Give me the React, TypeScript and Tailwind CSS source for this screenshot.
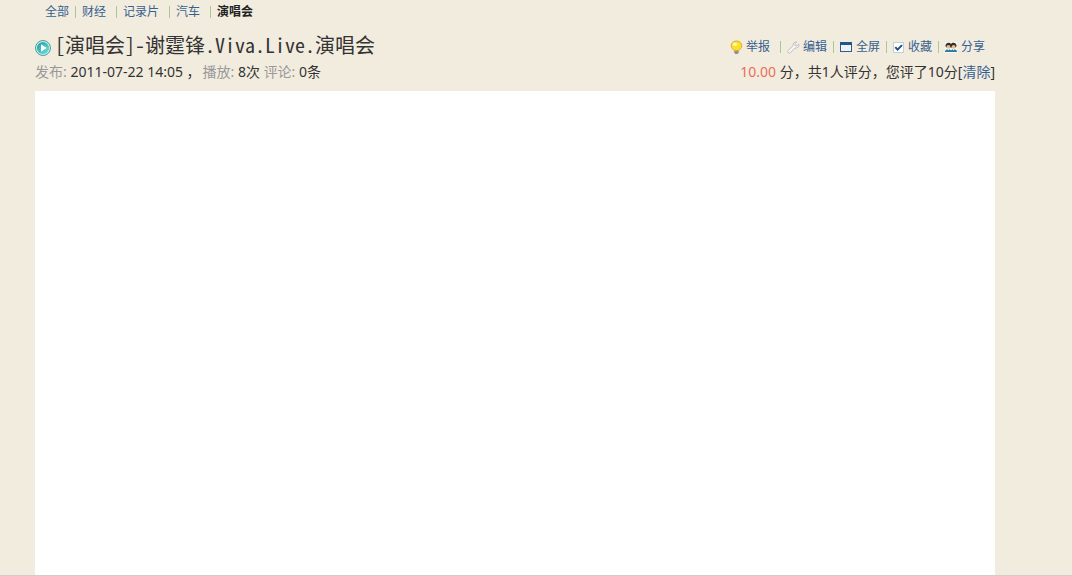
import React from 'react';

const categories = [
  { name: '全部', gap: 'pr-[6px]' },
  { name: '财经', gap: 'pl-[6px] pr-[10px]' },
  { name: '记录片', gap: 'pl-[6px] pr-[10px]' },
  { name: '汽车', gap: 'pl-[6px] pr-[10px]' },
];

const PlayIcon = () => (
  <svg width="16" height="16" viewBox="0 0 16 16" aria-hidden="true">
    <defs>
      <linearGradient id="play-fill" x1="0" y1="0" x2="1" y2="1">
        <stop offset="0" stopColor="#1f9aa6" />
        <stop offset="1" stopColor="#6fe3dc" />
      </linearGradient>
    </defs>
    <circle cx="8" cy="8" r="7.5" fill="#c9eeea" stroke="#4a9f9f" />
    <circle cx="8" cy="8" r="6.1" fill="url(#play-fill)" />
    <path d="M6 4.3v7.4L11.8 8z" fill="#fff" />
  </svg>
);

const BulbIcon = () => (
  <svg width="13" height="14" viewBox="0 0 13 14" aria-hidden="true">
    <path d="M6.5 1C3.4 1 1.2 3 1.2 5.7c0 2.4 1.8 3.3 2.8 4.9h5c1-1.6 2.8-2.5 2.8-4.9C11.8 3 9.6 1 6.5 1z" fill="#fbe02a" stroke="#e3a92c" />
    <ellipse cx="5" cy="4.3" rx="2.2" ry="1.8" fill="#fffbb0" />
    <path d="M4.3 11h4.4v1.7L7.6 14H5.4l-1.1-1.3z" fill="#8f9092" />
  </svg>
);

const WrenchIcon = () => (
  <svg width="13" height="13" viewBox="0 0 13 13" aria-hidden="true">
    <path d="M11.8 3.1 9.9 5 8.1 4.7 7.8 3l2-1.9C8 .6 5.6 2 6 4.7L1.1 9.6c-1.2 1.5.8 3.4 2.2 2.2L8 7c2.8.6 4.5-1.7 3.8-3.9z" fill="#f5f5f4" stroke="#bfc1c3" />
  </svg>
);

const WindowIcon = () => (
  <svg width="12" height="11" viewBox="0 0 12 11" aria-hidden="true">
    <rect x="0.5" y="0.5" width="11" height="9" fill="#eef3f6" stroke="#315b8b" />
    <path d="M0 0h12v3H0z" fill="#24558b" />
  </svg>
);

const CheckIcon = () => (
  <svg width="11" height="11" viewBox="0 0 11 11" aria-hidden="true">
    <rect x="0.5" y="0.5" width="10" height="10" fill="#fff" stroke="#c5cdd5" />
    <path d="M2.3 5.1 4.6 7.6 9 3.1" fill="none" stroke="#214f89" strokeWidth="2" />
  </svg>
);

const PeopleIcon = () => (
  <svg width="12" height="11" viewBox="0 0 12 11" aria-hidden="true">
    <path d="M0 0h12v11H0z" fill="#faf8f0" />
    <path d="M.5 4.5C0 0 5 0 6 2c1-2 6-2 5.5 2.5l-1 1H1.5z" fill="#30302e" />
    <circle cx="3.4" cy="4.8" r="1.9" fill="#f0b98a" />
    <circle cx="8.6" cy="4.8" r="1.9" fill="#f0b98a" />
    <path d="M0 9.5C.5 6.8 5 6.3 6 8.6c1-2.3 5.5-1.8 6 .9v.5H0z" fill="#267ca5" />
    <path d="M2.5 7h2L3.5 8.5zM7.5 7h2L8.5 8.5z" fill="#fff" />
  </svg>
);

const Separator = () => <span className="h-3 w-px bg-[#abc795]" />;

const actions = [
  { name: '举报', icon: <BulbIcon />, gap: 'gap-[3px] pr-[10px]' },
  { name: '编辑', icon: <WrenchIcon />, gap: 'gap-[3px] pl-[6px] pr-[6px]' },
  { name: '全屏', icon: <WindowIcon />, gap: 'gap-[4px] pl-[6px] pr-[6px]' },
  { name: '收藏', icon: <CheckIcon />, gap: 'gap-[4px] pl-[6px] pr-[6px]' },
  { name: '分享', icon: <PeopleIcon />, gap: 'gap-[4px] pl-[6px]' },
];

const App: React.FC = () => {
  return (
    <div className="flex min-h-screen flex-col border-b border-[#d0cec9] bg-[#f2ecdf] pl-[35px] pr-[77px] font-['Noto_Sans','Noto_Sans_CJK_SC',sans-serif] text-sm text-[#333]">
      {/* Category links */}
      <nav className="flex h-6 items-center pl-[10px] text-xs text-[#36618f]">
        {categories.map((category) => (
          <React.Fragment key={category.name}>
            <a href="#" className={category.gap}>{category.name}</a>
            <Separator />
          </React.Fragment>
        ))}
        <strong className="pl-[6px] text-[#222]">演唱会</strong>
      </nav>

      <header className="flex flex-col pt-[6px] pb-[9px]">
        <div className="flex h-8 items-center justify-between">
          <div className="flex items-center gap-[4px]">
            <span className="pt-[3px]"><PlayIcon /></span>
            <h1 className="pb-[3px] font-['Noto_Sans_CJK_SC',sans-serif] text-[20px] leading-7 [font-feature-settings:'hwid']">
              [演唱会]-谢霆锋.Viva.Live.演唱会
            </h1>
          </div>
          <div className="flex items-center pt-[2px] pr-[10px] text-xs text-[#36618f]">
            {actions.map((action, index) => (
              <React.Fragment key={action.name}>
                {index > 0 && <Separator />}
                <a href="#" className={`flex items-center ${action.gap}`}>
                  {action.icon}
                  {action.name}
                </a>
              </React.Fragment>
            ))}
          </div>
        </div>

        {/* Publish info and rating */}
        <div className="flex items-center justify-between leading-5">
          <p>
            <span className="text-[#999]">发布:</span> 2011-07-22 14:05 ，<span className="pl-[2px] text-[#999]">播放:</span> 8次{' '}
            <span className="text-[#999]">评论:</span> 0条
          </p>
          <p>
            <span className="text-[#e8705a]">10.00</span> 分，共1人评分，您评了10分[<a href="#" className="text-[#36618f]">清除</a>]
          </p>
        </div>
      </header>

      <main className="flex-1 bg-white" />
    </div>
  );
};

export default App;
